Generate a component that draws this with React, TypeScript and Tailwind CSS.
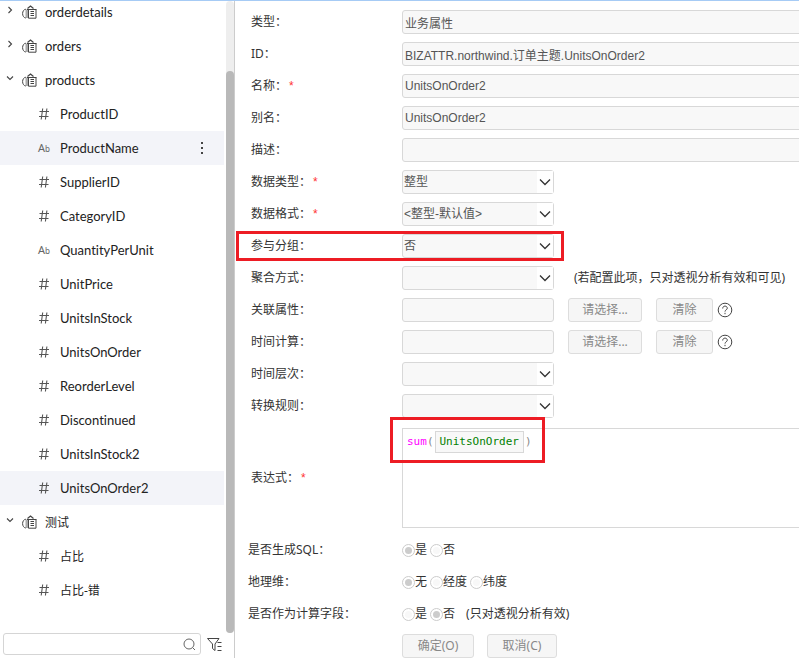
import React from "react";

type TreeIcon = "table" | "number" | "text";
type TreeNode = {
  name: string;
  icon: TreeIcon;
  open?: boolean;
  active?: boolean;
  menu?: boolean;
};

const nodes: TreeNode[] = [
  { name: "orderdetails", icon: "table" },
  { name: "orders", icon: "table" },
  { name: "products", icon: "table", open: true },
  { name: "ProductID", icon: "number" },
  { name: "ProductName", icon: "text", active: true, menu: true },
  { name: "SupplierID", icon: "number" },
  { name: "CategoryID", icon: "number" },
  { name: "QuantityPerUnit", icon: "text" },
  { name: "UnitPrice", icon: "number" },
  { name: "UnitsInStock", icon: "number" },
  { name: "UnitsOnOrder", icon: "number" },
  { name: "ReorderLevel", icon: "number" },
  { name: "Discontinued", icon: "number" },
  { name: "UnitsInStock2", icon: "number" },
  { name: "UnitsOnOrder2", icon: "number", active: true },
  { name: "测试", icon: "table", open: true },
  { name: "占比", icon: "number" },
  { name: "占比-错", icon: "number" },
];

function Chevron({ open }: { open?: boolean }) {
  return (
    <svg width="8" height="8" viewBox="0 0 8 8" fill="none" stroke="#444" strokeWidth="1.1" className="mb-1">
      <path d={open ? "M1 2.5 4 5.5 7 2.5" : "M2.5 1 5.5 4 2.5 7"} />
    </svg>
  );
}

function TableIcon() {
  return (
    <svg width="15" height="14" viewBox="0 0 15 14" fill="none" stroke="#444">
      <path d="M5.5 3.500 8.500 1l3 2.500" strokeWidth="1.200" />
      <path d="M4 4.200C1.700 4.400.600 6.400.600 8.600s1.100 4.200 3.400 4.400" strokeWidth="1" />
      <path d="M3.500 4.500h2.500v8.500H3.500z" fill="#aaa" stroke="none" />
      <path d="M6.500 4.500h7.500v8.700H6.500zM5 4.500h9.500" strokeWidth="1" />
      <path d="M8.500 6.500h3.500M8.500 8.500h3.500M8.500 10.500h3.500" strokeWidth="1" />
    </svg>
  );
}

function NumberIcon() {
  return (
    <svg width="12" height="14" viewBox="0 0 12 14" fill="none" stroke="#555" strokeWidth="1.100">
      <path d="M4.700 1.500 3.200 12.500M8.900 1.500 7.400 12.500M1.500 4.500h9.500M1 9.500h9.500" />
    </svg>
  );
}

function Row({ node }: { node: TreeNode }) {
  const group = node.icon === "table";
  const latin = /^[A-Za-z]/.test(node.name);
  return (
    <li
      className={`flex h-[34px] items-center gap-2 text-[#222] ${node.active ? "bg-[#f3f4f9]" : ""} ${
        group ? "pl-1.5" : "pl-9"
      }`}
    >
      {group && (
        <button type="button" aria-label={node.name}>
          <Chevron open={node.open} />
        </button>
      )}
      {group ? (
        <TableIcon />
      ) : (
        <span className="flex w-4 justify-center text-[#666]">
          {node.icon === "number" ? (
            <NumberIcon />
          ) : (
            <span className="text-[11px]">
              A<span className="text-[8px]">b</span>
            </span>
          )}
        </span>
      )}
      <span
        className={`pt-0.5 ${
          latin ? "font-['Lato',sans-serif] text-[13px] [font-variant-ligatures:none]" : "text-[12px]"
        }`}
      >
        {node.name}
      </span>
      {node.menu && (
        <button type="button" aria-label="更多" className="mr-5 ml-auto">
          <svg width="4" height="14" viewBox="0 0 4 14" fill="#444">
            <rect x="1" y="1" width="2" height="2" />
            <rect x="1" y="6" width="2" height="2" />
            <rect x="1" y="11" width="2" height="2" />
          </svg>
        </button>
      )}
    </li>
  );
}

function Required() {
  return <span className="ml-0.5 font-['Liberation_Sans',sans-serif] text-[#f33]">*</span>;
}

function Field({
  label,
  id,
  required,
  marked,
  children,
}: {
  label: string;
  id: string;
  required?: boolean;
  marked?: boolean;
  children: React.ReactNode;
}) {
  return (
    <div className="relative flex h-8 items-center pl-4">
      <label htmlFor={id} className="w-[151px] shrink-0">
        {label}：{required && <Required />}
      </label>
      {children}
      {marked && (
        <div className="pointer-events-none absolute inset-y-px left-px w-[328px] border-3 border-[#ed1c24]" />
      )}
    </div>
  );
}

const inputLook =
  "h-6 rounded-[3px] border border-[#d8d8d8] bg-[#f8f8f8] text-[#555] font-['Liberation_Sans','Noto_Sans_CJK_SC',sans-serif]";

function WideInput({ id, value }: { id: string; value: string }) {
  return <input id={id} readOnly value={value} className={`${inputLook} -mr-1 min-w-0 flex-1 px-0.5`} />;
}

function ShortInput({ id }: { id: string }) {
  return <input id={id} readOnly className={`${inputLook} w-[152px]`} />;
}

function Select({ id, value }: { id: string; value: string }) {
  return (
    <div className="relative w-[152px]">
      <select id={id} className={`${inputLook} w-full appearance-none px-px`}>
        <option>{value}</option>
      </select>
      <span className="pointer-events-none absolute inset-y-px right-px flex w-4 items-center justify-center bg-white">
        <svg width="12" height="8" viewBox="0 0 12 8" fill="none" stroke="#333" strokeWidth="1.300">
          <path d="M1 1.500 6 6.500 11 1.500" />
        </svg>
      </span>
    </div>
  );
}

function Button({ children, className }: { children: React.ReactNode; className: string }) {
  return (
    <button type="button" className={`h-6 rounded-[3px] border border-[#ddd] bg-[#f6f6f6] text-[#888] ${className}`}>
      {children}
    </button>
  );
}

function Help() {
  return (
    <button type="button" aria-label="帮助" className="ml-1">
      <svg width="16" height="16" viewBox="0 0 16 16" fill="none" stroke="#444" strokeWidth="1">
        <circle cx="8" cy="8" r="6.800" />
        <path d="M5.700 6.500c0-1.500 1-2.400 2.300-2.400s2.300.9 2.300 2.100c0 1.600-2.300 1.700-2.300 3.400M8 10.800v1.400" />
      </svg>
    </button>
  );
}

function Picker({ id }: { id: string }) {
  return (
    <>
      <ShortInput id={id} />
      <Button className="ml-3.5 w-[74px]">请选择...</Button>
      <Button className="ml-3.5 w-[57px]">清除</Button>
      <Help />
    </>
  );
}

function Radios({
  label,
  name,
  options,
  selected,
  note,
}: {
  label: string;
  name: string;
  options: string[];
  selected: string;
  note?: string;
}) {
  return (
    <div role="radiogroup" aria-label={label} className="flex h-8 items-center pl-[13px]">
      <span className="w-[154px] shrink-0">{label}：</span>
      {options.map((option) => (
        <label key={option} className="mr-[3px] flex items-center">
          <input
            type="radio"
            name={name}
            defaultChecked={option === selected}
            className="size-[13px] appearance-none rounded-full border border-[#ccc] bg-[#f8f8f8] bg-clip-content p-0.5 checked:bg-[#ccc]"
          />
          {option}
        </label>
      ))}
      {note && <span className="ml-2">{note}</span>}
    </div>
  );
}

export default function App() {
  return (
    <div
      lang="zh-CN"
      className="flex h-screen flex-col overflow-hidden bg-white font-['Noto_Sans','Noto_Sans_CJK_SC',sans-serif] text-[12px] text-[#333]"
    >
      <div className="h-px shrink-0 bg-[#a6cbf5]" />
      <div className="flex min-h-0 flex-1">
        <aside className="flex w-[235px] shrink-0 flex-col border-r border-[#ccc]">
          <div className="flex min-h-0 flex-1 gap-0.5">
            <div className="min-w-0 flex-1 overflow-hidden">
              <ul className="-mt-1.5">
                {nodes.map((node) => (
                  <Row key={node.name} node={node} />
                ))}
              </ul>
            </div>
            <div className="flex w-2 flex-col justify-end rounded-full bg-[#eee]">
              <div className="h-[89%] rounded-full bg-[#b9b9b9]" />
            </div>
          </div>
          <div className="flex h-[25px] shrink-0 items-start gap-1.5 pr-3 pl-[3px]">
            <div className="flex h-[22px] w-[198px] items-center rounded-[3px] border border-[#d5d5d5] pr-1">
              <input aria-label="搜索" className="min-w-0 flex-1 px-1 outline-none" />
              <svg width="13" height="13" viewBox="0 0 13 13" fill="none" stroke="#666" strokeWidth="1">
                <circle cx="6" cy="6" r="5" />
                <path d="m9.700 9.700 2.300 2.300" />
              </svg>
            </div>
            <button type="button" aria-label="筛选" className="pt-1">
              <svg width="16" height="15" viewBox="0 0 16 15" fill="none" stroke="#444" strokeWidth="1">
                <path d="M.500 1.500h11.500L8 7v6.500l-2.500-2V7zM10.500 5.500h4M10.500 9.500h4M10.500 13.500h4" />
              </svg>
            </button>
          </div>
        </aside>

        <form className="min-w-0 flex-1 pt-[5px]">
          <Field label="类型" id="kind">
            <WideInput id="kind" value="业务属性" />
          </Field>
          <Field label="ID" id="attr-id">
            <WideInput id="attr-id" value="BIZATTR.northwind.订单主题.UnitsOnOrder2" />
          </Field>
          <Field label="名称" id="name" required>
            <WideInput id="name" value="UnitsOnOrder2" />
          </Field>
          <Field label="别名" id="alias">
            <WideInput id="alias" value="UnitsOnOrder2" />
          </Field>
          <Field label="描述" id="desc">
            <WideInput id="desc" value="" />
          </Field>
          <Field label="数据类型" id="data-type" required>
            <Select id="data-type" value="整型" />
          </Field>
          <Field label="数据格式" id="data-format" required>
            <Select id="data-format" value="<整型-默认值>" />
          </Field>
          <Field label="参与分组" id="grouping" marked>
            <Select id="grouping" value="否" />
          </Field>
          <Field label="聚合方式" id="aggregate">
            <Select id="aggregate" value="" />
            <span className="ml-5 whitespace-nowrap">(若配置此项，只对透视分析有效和可见)</span>
          </Field>
          <Field label="关联属性" id="related">
            <Picker id="related" />
          </Field>
          <Field label="时间计算" id="time-calc">
            <Picker id="time-calc" />
          </Field>
          <Field label="时间层次" id="time-level">
            <Select id="time-level" value="" />
          </Field>
          <Field label="转换规则" id="convert">
            <Select id="convert" value="" />
          </Field>

          <div className="mt-1.5 mb-1.5 flex items-center pl-4">
            <span id="expression-label" className="w-[151px] shrink-0">
              表达式：
              <Required />
            </span>
            <div className="relative -mr-1 h-[100px] min-w-0 flex-1 border border-[#d8d8d8]">
              <div
                role="textbox"
                aria-labelledby="expression-label"
                className="flex items-center px-1 pt-0.5 font-['DejaVu_Sans_Mono',monospace] text-[11px] text-[#888]"
              >
                <span className="text-[#f0f]">sum</span>(
                <span className="mx-px flex h-[22px] items-center border border-[#d8d8d8] bg-[#f8f8f8] px-1 text-[#008000]">
                  UnitsOnOrder
                </span>
                )
              </div>
              <div className="pointer-events-none absolute -top-3 -left-[13px] h-[46px] w-[155px] border-3 border-[#ed1c24]" />
            </div>
          </div>

          <Radios label="是否生成SQL" name="sql" options={["是", "否"]} selected="是" />
          <Radios label="地理维" name="geo" options={["无", "经度", "纬度"]} selected="无" />
          <Radios
            label="是否作为计算字段"
            name="calc"
            options={["是", "否"]}
            selected="否"
            note="(只对透视分析有效)"
          />
          <div className="mt-1 flex gap-[13px] pl-[167px]">
            <Button className="w-[72px]">确定(O)</Button>
            <Button className="w-[70px]">取消(C)</Button>
          </div>
        </form>
      </div>
    </div>
  );
}
